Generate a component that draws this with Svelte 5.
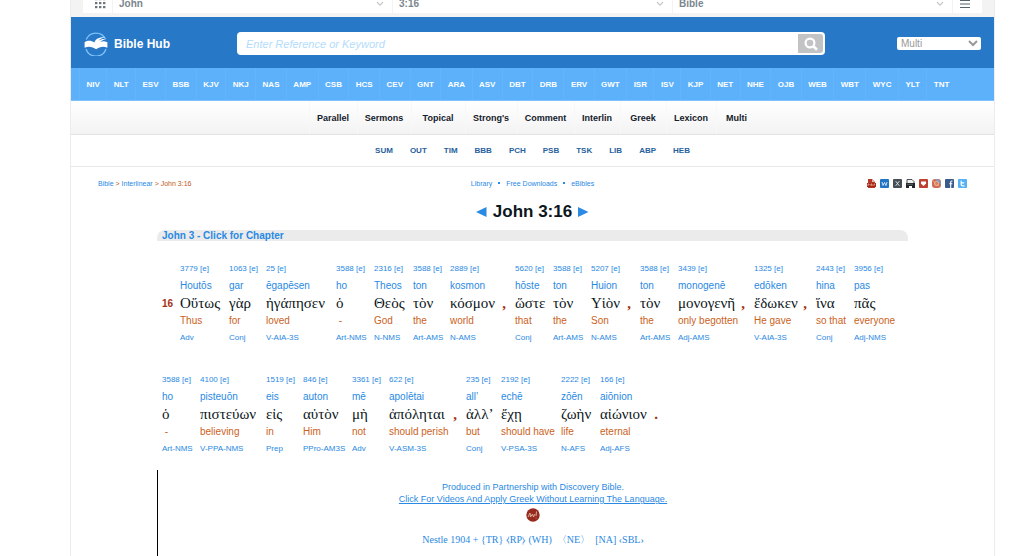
<script lang="ts">
	type Word = {
		num: string;
		translit: string;
		greek: string;
		english: string;
		parse: string;
		width: number;
		punct?: string;
	};

	const versions =
		'NIV NLT ESV BSB KJV NKJ NAS AMP CSB HCS CEV GNT ARA ASV DBT DRB ERV GWT ISR ISV KJP NET NHE OJB WEB WBT WYC YLT TNT'.split(' ');
	const tools = ['Parallel', 'Sermons', 'Topical', "Strong's", 'Comment', 'Interlin', 'Greek', 'Lexicon', 'Multi'];
	const commentaries = 'SUM OUT TIM BBB PCH PSB TSK LIB ABP HEB'.split(' ');
	const selectors = ['John', '3:16', 'Bible'];

	const w = (
		num: string,
		translit: string,
		greek: string,
		english: string,
		parse: string,
		width: number,
		punct = ''
	): Word => ({ num, translit, greek, english, parse, width, punct });

	const lines: { verse?: string; words: Word[] }[] = [
		{
			verse: '16',
			words: [
				w('3779', 'Houtōs', 'Οὕτως', 'Thus', 'Adv', 49),
				w('1063', 'gar', 'γὰρ', 'for', 'Conj', 37),
				w('25', 'ēgapēsen', 'ἠγάπησεν', 'loved', 'V-AIA-3S', 70),
				w('3588', 'ho', 'ὁ', ' - ', 'Art-NMS', 38),
				w('2316', 'Theos', 'Θεὸς', 'God', 'N-NMS', 39),
				w('3588', 'ton', 'τὸν', 'the', 'Art-AMS', 37),
				w('2889', 'kosmon', 'κόσμον', 'world', 'N-AMS', 65, ','),
				w('5620', 'hōste', 'ὥστε', 'that', 'Conj', 38),
				w('3588', 'ton', 'τὸν', 'the', 'Art-AMS', 38),
				w('5207', 'Huion', 'Υἱὸν', 'Son', 'N-AMS', 49, ','),
				w('3588', 'ton', 'τὸν', 'the', 'Art-AMS', 38),
				w('3439', 'monogenē', 'μονογενῆ', 'only begotten', 'Adj-AMS', 76, ','),
				w('1325', 'edōken', 'ἔδωκεν', 'He gave', 'V-AIA-3S', 62, ','),
				w('2443', 'hina', 'ἵνα', 'so that', 'Conj', 38),
				w('3956', 'pas', 'πᾶς', 'everyone', 'Adj-NMS', 48)
			]
		},
		{
			words: [
				w('3588', 'ho', 'ὁ', ' - ', 'Art-NMS', 38),
				w('4100', 'pisteuōn', 'πιστεύων', 'believing', 'V-PPA-NMS', 66),
				w('1519', 'eis', 'εἰς', 'in', 'Prep', 37),
				w('846', 'auton', 'αὐτὸν', 'Him', 'PPro-AM3S', 49),
				w('3361', 'mē', 'μὴ', 'not', 'Adv', 37),
				w('622', 'apolētai', 'ἀπόληται', 'should perish', 'V-ASM-3S', 77, ','),
				w('235', 'all’', 'ἀλλ’', 'but', 'Conj', 35),
				w('2192', 'echē', 'ἔχῃ', 'should have', 'V-PSA-3S', 60),
				w('2222', 'zōēn', 'ζωὴν', 'life', 'N-AFS', 39),
				w('166', 'aiōnion', 'αἰώνιον', 'eternal', 'Adj-AFS', 67, '.')
			]
		}
	];
</script>

<div class="page">
	<div class="picker">
		<div class="picker-row">
			<button class="picker-btn books" type="button" aria-label="Books">
				<svg width="11" height="11" viewBox="0 0 11 11" fill="#6c757c">
					{#each [0, 4, 8] as y}
						{#each [0, 4, 8] as x}
							<rect {x} {y} width="2.4" height="2.2" />
						{/each}
					{/each}
				</svg>
			</button>
			{#each selectors as name}
				<div class="picker-cell">
					<select aria-label={name}><option>{name}</option></select>
					<svg width="8" height="6" viewBox="0 0 8 6" fill="none" stroke="#c5c8ca" stroke-width="1.2">
						<path d="M1 1l3 3.2L7 1" />
					</svg>
				</div>
			{/each}
			<button class="picker-btn menu" type="button" aria-label="Menu">
				<svg width="10" height="10" viewBox="0 0 10 10" stroke="#59636b" stroke-width="1.2">
					<path d="M0 1.5h10M0 5h10M0 8.5h10" />
				</svg>
			</button>
		</div>
	</div>

	<header>
		<a class="logo" href="/">
			<svg width="24" height="24" viewBox="0 0 24 24">
				<path d="M2.2 7.5A10.6 10.6 0 0 1 21.5 7M2 17a10.6 10.6 0 0 0 20 0" fill="none" stroke="#7cc3fb" stroke-width="1.3" />
				<path
					d="M.6 10.2c3-2 6.700-2 9.700.3 1.200-3.600 4.600-5.300 11-5.200-3.800.8-5.800 2-6.900 3.500 2-1.400 4.700-2.100 8-1.700-3 .6-4.900 1.500-6.200 2.900 2-.9 4.400-.9 7.200.2v5.500c-4-1.700-7.600-1.200-11.300 1.600-3.700-2.800-7.500-3.300-11.500-1.600z"
					fill="#fff"
				/>
			</svg>
			<span>Bible Hub</span>
		</a>
		<form class="search" role="search">
			<input type="text" aria-label="Search" placeholder="Enter Reference or Keyword" />
			<button type="submit" aria-label="Go">
				<svg width="14" height="14" viewBox="0 0 14 14" fill="none" stroke="#fff">
					<circle cx="6" cy="6" r="4.4" stroke-width="2.2" />
					<path d="M9.3 9.3L13 12.8" stroke-width="2.6" />
				</svg>
			</button>
		</form>
		<select class="version" aria-label="Version"><option>Multi</option></select>
	</header>

	<nav class="versions">
		{#each versions as v}
			<a href="/{v.toLowerCase()}/">{v}</a>
		{/each}
	</nav>

	<nav class="tools">
		{#each tools as t}
			<a href="/tools/">{t}</a>
		{/each}
	</nav>

	<nav class="comms">
		{#each commentaries as c}
			<a href="/{c.toLowerCase()}/">{c}</a>
		{/each}
	</nav>

	<main>
		<div class="meta">
			<div class="crumbs">
				<a href="/">Bible</a> &gt; <a href="/interlinear/">Interlinear</a> &gt; John 3:16
			</div>
			<div class="links">
				<a href="/library/">Library</a><i></i><a href="/downloads/">Free Downloads</a><i></i><a href="/ebibles/">eBibles</a>
			</div>
			<div class="share">
				<a href="#pdf" aria-label="PDF">
					<svg viewBox="0 0 9 9">
						<path d="M1 0h4l3 3v6H1z" fill="#b23a2b" />
						<path d="M5 0l3 3H5z" fill="#e9b3a6" />
						<rect y="4" width="9" height="4" fill="#a62618" />
						<path d="M1 7V5h1v1M4 7V5h1v2M7 7V5h1" fill="none" stroke="#f3c3a8" stroke-width=".7" />
					</svg>
				</a>
				<a href="#word" aria-label="Word">
					<svg viewBox="0 0 9 9"><rect width="9" height="9" rx="1" fill="#2375c4" /><path d="M2 3l1 3.5 1.5-3L6 6.5 7 3" fill="none" stroke="#d9edff" stroke-width=".9" /></svg>
				</a>
				<a href="#x" aria-label="X">
					<svg viewBox="0 0 9 9"><rect width="9" height="9" rx="1" fill="#454e55" /><path d="M2.7 2.2l3.6 4.6M6.3 2.2L2.7 6.8" stroke="#e8edf0" stroke-width=".9" /></svg>
				</a>
				<a href="#print" aria-label="Print">
					<svg viewBox="0 0 9 9"><path d="M1 4V.5h5l2 2V4" fill="#eee" stroke="#3a4248" stroke-width=".9" /><path d="M0 4h9v5H6V7H3v2H0z" fill="#20272c" /><path d="M1.5 5.3h6" stroke="#cfd4d7" stroke-width=".7" stroke-dasharray="1 1" /></svg>
				</a>
				<a href="#save" aria-label="Favorite">
					<svg viewBox="0 0 9 9"><rect width="9" height="9" rx="1" fill="#bd4231" /><path d="M2 2.5h5v2L4.5 7 2 4.5z" fill="#fff" /></svg>
				</a>
				<a href="#photos" aria-label="Instagram">
					<svg viewBox="0 0 9 9"><rect width="9" height="9" rx="3" fill="#d36a58" /><path d="M3 0h3l3 3v3z" fill="#819bbd" /><circle cx="4.5" cy="4.5" r="2" fill="none" stroke="#f3d3b0" stroke-width=".8" /><path d="M1 2l6 5" stroke="#e8b45f" stroke-width=".8" /></svg>
				</a>
				<a href="#facebook" aria-label="Facebook">
					<svg viewBox="0 0 9 9"><rect width="9" height="9" rx="1" fill="#3b5a8c" /><path d="M7.5 2H6.7Q5.7 2 5.7 3v6M4.3 4.8h3" fill="none" stroke="#fff" stroke-width="1.1" /></svg>
				</a>
				<a href="#twitter" aria-label="Twitter">
					<svg viewBox="0 0 9 9"><rect width="9" height="9" rx="1" fill="#55b1f6" /><path d="M3.2 1.8v3.7Q3.2 6.8 4.5 6.8h2M3.2 3.8h3" fill="none" stroke="#fff" stroke-width="1.2" /></svg>
				</a>
			</div>
		</div>

		<h1>
			<a href="#prev" aria-label="Previous verse"><svg width="11" height="10" viewBox="0 0 11 10"><path d="M0 5L10.5 0v10z" /></svg></a>
			John 3:16
			<a href="#next" aria-label="Next verse"><svg width="11" height="10" viewBox="0 0 11 10"><path d="M10.5 5L0 0v10z" /></svg></a>
		</h1>

		<div class="content">
			<div class="chapter"><a href="/interlinear/john/3.htm">John 3 - Click for Chapter</a></div>

			<div class="passage">
				{#each lines as line}
					<div class="line">
						{#if line.verse}
							<div class="verse">{line.verse}</div>
						{/if}
						{#each line.words as word}
							<div class="word" style:width="{word.width}px">
								<span class="strongs"><a href="/greek/{word.num}.htm">{word.num}</a> <a href="#e">[e]</a></span>
								<a class="translit" href="/greek/{word.num}.htm">{word.translit}</a>
								<span class="greek">
									{word.greek}
									{#if word.punct}<b>{word.punct}</b>{/if}
								</span>
								<span class="english">{word.english}</span>
								<a class="parse" href="#parse">{word.parse}</a>
							</div>
						{/each}
					</div>
				{/each}
			</div>

			<footer>
				<p>Produced in Partnership with Discovery Bible.</p>
				<p><a href="#videos">Click For Videos And Apply Greek Without Learning The Language.</a></p>
				<svg width="14" height="14" viewBox="0 0 14 14">
					<circle cx="7" cy="7" r="6.7" fill="#962a1e" />
					<path d="M2 9l2-4 .5 4 2-3 1 3 1.5-3M10.5 3.5L10 8M9.8 10h.6" fill="none" stroke="#e2bda2" stroke-width=".9" />
				</svg>
				<p class="nestle">Nestle 1904 + &#123;TR&#125; ⧼RP⧽ (WH) &nbsp;〈NE〉 &nbsp;[NA] ‹SBL›</p>
			</footer>
		</div>
	</main>
</div>

<style>
	:global(body) {
		background: #fff;
		overflow: hidden;
	}
	.page {
		margin: 0 29px 0 70px;
		font-family: 'Liberation Sans', Arial, sans-serif;
		border: 1px solid #ececec;
		border-width: 0 1px;
	}
	a {
		color: #2989e3;
		text-decoration: none;
	}
	button {
		border: 0;
		padding: 0;
		display: flex;
		align-items: center;
		justify-content: center;
		cursor: pointer;
	}
	.picker {
		margin-top: -6px;
		padding: 0 12px 4px;
		background: #f3f3f3;
	}
	.picker-row {
		display: flex;
		gap: 1px;
		height: 19px;
	}
	.picker-btn {
		box-sizing: border-box;
		width: 29px;
		background: #fff;
	}
	.books {
		padding-left: 5px;
	}
	.menu {
		padding-right: 5px;
	}
	.picker-cell {
		flex: 1;
		display: flex;
		align-items: center;
		padding: 0 8px 0 6px;
		background: #fff;
	}
	.picker-cell select {
		flex: 1;
		appearance: none;
		border: 0;
		padding: 0;
		background: none;
		color: #7a868e;
		font: bold 10px 'Liberation Sans', sans-serif;
	}
	header {
		display: flex;
		align-items: center;
		box-sizing: border-box;
		height: 51px;
		padding: 2px 13px 0;
		background: #2878c8;
	}
	.logo {
		display: flex;
		align-items: center;
		gap: 6px;
		width: 153px;
		color: #fff;
		font-weight: bold;
		font-size: 12px;
	}
	.search {
		flex: 1;
		display: flex;
		max-width: 588px;
		height: 23px;
		padding: 2px;
		box-sizing: border-box;
		background: #fff;
		border-radius: 4px;
	}
	.search input {
		flex: 1;
		border: 0;
		padding: 0 7px;
		background: none;
		font: italic 11px 'Liberation Sans', sans-serif;
	}
	.search input::placeholder {
		color: #b3dcfb;
	}
	.search button {
		width: 25px;
		background: #c1c3c5;
		border-radius: 0 3px 3px 0;
	}
	.version {
		width: 84px;
		height: 13px;
		margin-left: auto;
		padding: 0;
		border: 0;
		border-radius: 2px;
		background: #fff;
		color: #999;
		font: 10px 'Liberation Sans', sans-serif;
	}
	nav {
		display: flex;
		box-sizing: border-box;
	}
	nav a {
		display: flex;
		align-items: center;
		justify-content: center;
		font-weight: bold;
		font-size: 8px;
	}
	.versions {
		height: 33px;
		padding: 0 38px 0 8px;
		background: #5db1fb;
		border-bottom: 1px solid #7dc0fb;
	}
	.versions a {
		flex: 1 1 auto;
		color: #fff;
		border-left: 1px solid #63b4fb;
	}
	.tools {
		display: grid;
		grid-template-columns: 48px 54px 54px 52px 57px 46px 46px 50px 41px;
		justify-content: center;
		height: 34px;
		background: linear-gradient(#fff, #f3f3f3);
		border-bottom: 1px solid #e3e3e3;
	}
	.tools a {
		color: #14202b;
		border-left: 1px solid #f8f8f8;
		font-size: 9px;
	}
	.comms {
		justify-content: center;
		gap: 17px;
		height: 32px;
		border-bottom: 1px solid #e8e8e8;
	}
	.comms a {
		color: #28619d;
	}
	.meta {
		display: grid;
		grid-template-columns: 1fr auto 1fr;
		align-items: center;
		height: 33px;
		padding: 0 27px;
		font-size: 7px;
	}
	.crumbs {
		color: #c05a20;
	}
	.links {
		display: flex;
		align-items: center;
		gap: 6px;
	}
	.links i {
		width: 2px;
		height: 2px;
		margin-bottom: 2px;
		background: #2989e3;
	}
	.share {
		display: flex;
		justify-content: flex-end;
		gap: 4px;
	}
	.share svg {
		display: block;
		width: 9px;
		height: 9px;
	}
	h1 {
		display: flex;
		align-items: center;
		justify-content: center;
		gap: 6px;
		height: 24px;
		margin: 0 0 6px;
		color: #0b1620;
		font-size: 17px;
	}
	h1 svg {
		display: block;
		fill: #2989e3;
	}
	.content {
		max-width: 751px;
		margin: 0 auto;
	}
	.chapter {
		height: 11px;
		padding-left: 5px;
		background: #ebebeb;
		border-radius: 8px 8px 0 0;
		font-weight: bold;
		font-size: 10px;
		line-height: 11px;
	}
	.passage {
		display: flex;
		flex-direction: column;
		gap: 27px;
		padding: 20px 0 14px 5px;
	}
	.line {
		display: flex;
	}
	.verse {
		width: 18px;
		padding-top: 34px;
		color: #a33216;
		font-weight: bold;
		font-size: 10px;
		line-height: 18px;
	}
	.word {
		display: flex;
		flex-direction: column;
		white-space: nowrap;
	}
	.strongs {
		font-size: 8px;
		line-height: 16px;
	}
	.translit {
		font-size: 10px;
		line-height: 18px;
	}
	.greek {
		display: flex;
		padding-right: 9px;
		color: #0b1620;
		font-family: 'Liberation Serif', serif;
		font-size: 15px;
		line-height: 16px;
	}
	.greek b {
		margin-left: auto;
		color: #a33216;
	}
	.english {
		color: #cb621c;
		font-size: 10px;
		line-height: 20px;
		white-space: pre;
	}
	.parse {
		font-size: 8px;
		line-height: 14px;
	}
	footer {
		display: flex;
		flex-direction: column;
		align-items: center;
		padding-top: 11px;
		border-left: 1px solid #000;
		color: #2989e3;
		font-size: 9px;
		line-height: 12px;
	}
	p {
		margin: 0;
	}
	footer p a {
		text-decoration: underline;
	}
	footer svg {
		margin: 3px 0 12px;
	}
	.nestle {
		padding-bottom: 16px;
		font-family: 'Liberation Serif', serif;
		font-size: 10px;
	}
</style>
